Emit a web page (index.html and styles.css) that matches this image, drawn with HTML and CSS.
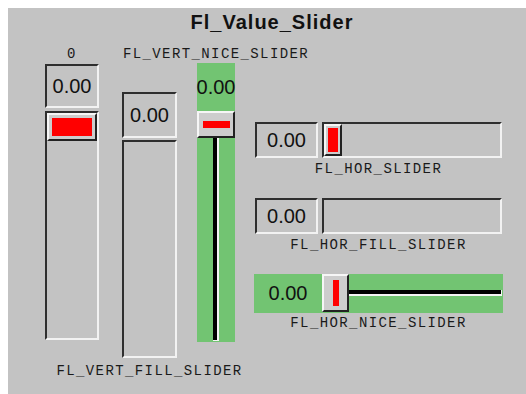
FILE: index.html
```html
<!DOCTYPE html>
<html>

<head>
    <meta charset="UTF-8">
    <title>Fl_Value_Slider</title>
    <link rel="stylesheet" href="styles.css">
</head>

<body>
    <div class="window">
        <h1 class="title">Fl_Value_Slider</h1>
        <div class="main">
            <div class="col col-a">
                <div class="lbl lbl-top">0</div>
                <div class="value down va">0.00</div>
                <div class="track down ta">
                    <div class="knob knob-v"><span class="red"></span></div>
                </div>
            </div>
            <div class="col col-b">
                <div class="value down vb">0.00</div>
                <div class="track down tb"></div>
                <div class="lbl lbl-under">FL_VERT_FILL_SLIDER</div>
            </div>
            <div class="col col-c">
                <div class="lbl lbl-top">FL_VERT_NICE_SLIDER</div>
                <div class="nice-v">
                    <div class="nice-value">0.00</div>
                    <div class="knob knob-nv"><span class="red"></span></div>
                    <div class="rail-v"><span class="line-v"></span></div>
                </div>
            </div>
            <div class="col col-d">
                <div class="hrow first">
                    <div class="value down vh">0.00</div>
                    <div class="track down th">
                        <div class="knob knob-h"><span class="red"></span></div>
                    </div>
                </div>
                <div class="lbl lbl-h">FL_HOR_SLIDER</div>

                <div class="hrow">
                    <div class="value down vh">0.00</div>
                    <div class="track down th"></div>
                </div>
                <div class="lbl lbl-h">FL_HOR_FILL_SLIDER</div>

                <div class="nice-h">
                    <div class="nice-value nh">0.00</div>
                    <div class="knob knob-nh"><span class="red"></span></div>
                    <div class="rail-h"><span class="line-h"></span></div>
                </div>
                <div class="lbl lbl-nh">FL_HOR_NICE_SLIDER</div>
            </div>
        </div>
    </div>
</body>

</html>
```

FILE: styles.css
```css
html, body {
    background-color: #fff;
}

body {
    margin: 8px 0 0 8px;
    overflow: hidden;
}

.window {
    height: 386px;
    background-color: #c3c3c3;
    color: #111;
}

.title {
    margin: 0;
    padding: 3px 0 0 10px;
    height: 24px;
    line-height: 24px;
    text-align: center;
    font: bold 20px "Liberation Sans", Arial, sans-serif;
    letter-spacing: 1px;
}

.main {
    display: flex;
    align-items: flex-start;
}

.col {
    display: flex;
    flex-direction: column;
}

/* labels */
.lbl {
    display: flex;
    justify-content: center;
    white-space: nowrap;
    height: 14px;
    line-height: 14px;
    font: 14px/14px "Liberation Mono", "DejaVu Sans Mono", monospace;
    letter-spacing: 1.4px;
    color: #1a1a1a;
}

.lbl-top {
    margin-top: 12px;
}

.lbl-under {
    margin-top: 6px;
}

.lbl-h {
    margin-top: 4px;
}

.lbl-nh {
    margin-top: 3px;
}

/* boxes */
.down {
    box-sizing: border-box;
    border: 2px solid;
    border-color: #2e2e2e #f2f2f2 #f2f2f2 #2e2e2e;
}

.value {
    display: flex;
    align-items: center;
    justify-content: center;
    font: 20px "Liberation Sans", Arial, sans-serif;
}

.knob {
    box-sizing: border-box;
    display: flex;
    align-items: center;
    justify-content: center;
    background-color: #cdcdcd;
    border: 2px solid;
    border-color: #f6f6f6 #222 #222 #f6f6f6;
}

.red {
    display: block;
    background-color: #f00;
}

/* vertical slider */
.col-a {
    width: 54px;
    margin-left: 37px;
}

.va {
    margin-top: 3px;
    height: 44px;
}

.ta {
    margin-top: 3px;
    height: 229px;
}

.knob-v {
    height: 28px;
    padding: 3px;
}

.knob-v .red {
    width: 100%;
    height: 100%;
}

/* vertical fill slider */
.col-b {
    width: 55px;
    margin-left: 23px;
}

.vb {
    margin-top: 57px;
    height: 46px;
}

.tb {
    margin-top: 2px;
    height: 218px;
}

/* vertical nice slider */
.col-c {
    width: 38px;
    margin-left: 20px;
}

.nice-v {
    margin-top: 2px;
    height: 279px;
    background-color: #72c472;
    display: flex;
    flex-direction: column;
}

.nice-value {
    height: 48px;
    display: flex;
    align-items: center;
    justify-content: center;
    font: 20px "Liberation Sans", Arial, sans-serif;
}

.knob-nv {
    height: 27px;
}

.knob-nv .red {
    width: 27px;
    height: 7px;
}

.rail-v {
    flex: 1;
}

.line-v {
    display: block;
    width: 4px;
    height: 202px;
    margin-left: 16px;
    background-color: #000;
    border-right: 2px solid #f4f4f4;
    border-bottom: 1px solid #f4f4f4;
}

/* horizontal sliders */
.col-d {
    width: 249px;
    margin-left: 19px;
}

.hrow {
    display: flex;
    gap: 4px;
    height: 36px;
    margin-top: 22px;
}

.hrow.first {
    margin-top: 87px;
}

.vh {
    width: 63px;
    margin-left: 1px;
    height: 36px;
}

.th {
    width: 180px;
    height: 36px;
}

.knob-h {
    width: 18px;
    height: 32px;
    padding: 2px;
}

.knob-h .red {
    width: 100%;
    height: 100%;
}

.nice-h {
    display: flex;
    height: 39px;
    margin-top: 22px;
    background-color: #72c472;
}

.nh {
    width: 68px;
    height: 39px;
}

.knob-nh {
    width: 27px;
    height: 38px;
}

.knob-nh .red {
    width: 6px;
    height: 26px;
}

.rail-h {
    flex: 1;
    padding-right: 1px;
}

.line-h {
    display: block;
    height: 4px;
    margin-top: 16px;
    background-color: #000;
    border-bottom: 2px solid #f4f4f4;
    border-right: 1px solid #f4f4f4;
}
```
